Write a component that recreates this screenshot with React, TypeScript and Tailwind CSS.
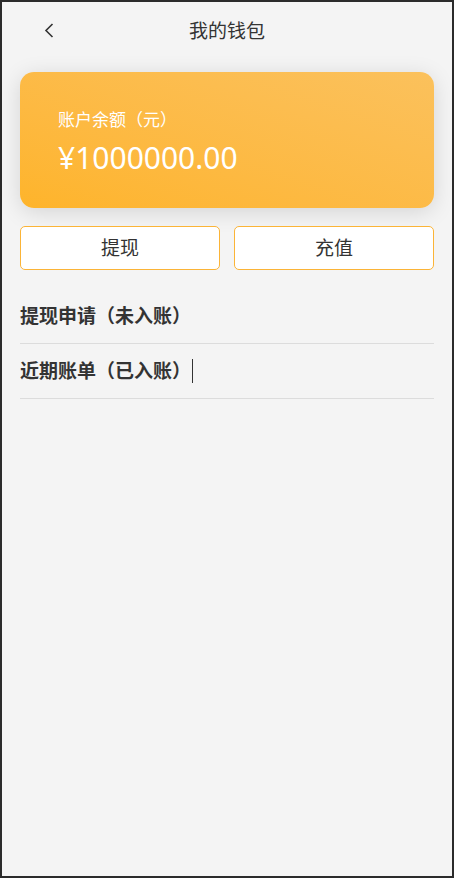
import React from "react";

export default function App() {
  return (
    <div
      className="w-[454px] h-[878px] border-2 border-[#2b2b2b] bg-[#f4f4f4] flex flex-col"
      style={{ fontFamily: '"Noto Sans", "Noto Sans CJK SC", sans-serif' }}
    >
      <div className="relative h-[58px] flex items-center justify-center shrink-0">
        <svg
          className="absolute left-[42px] top-[21px]"
          width="10"
          height="15"
          viewBox="0 0 10 15"
          fill="none"
        >
          <polyline
            points="8.5,1 2,7.5 8.5,14"
            stroke="#333"
            strokeWidth="1.6"
            fill="none"
          />
        </svg>
        <span className="text-[19px] text-[#333] leading-[24px]">我的钱包</span>
      </div>
      <div className="px-[18px] pt-[12px] flex flex-col">
        <div className="h-[136px] rounded-[14px] bg-linear-to-tr from-[#feb42a] to-[#fbc15c] shadow-[0_4px_22px_rgba(0,0,0,0.13)] pl-[38px] pt-[38px] flex flex-col text-white">
          <div className="text-[17px] leading-[20px]">账户余额（元）</div>
          <div className="text-[30px] leading-[36px] mt-[10px]">¥1000000.00</div>
        </div>
        <div className="mt-[18px] flex gap-[14px]">
          <button className="flex-1 h-[44px] bg-white border border-[#fbb437] rounded-[5px] text-[19px] text-[#333] flex items-center justify-center">
            提现
          </button>
          <button className="flex-1 h-[44px] bg-white border border-[#fbb437] rounded-[5px] text-[19px] text-[#333] flex items-center justify-center">
            充值
          </button>
        </div>
        <div className="mt-[19px] flex flex-col">
          <div className="h-[55px] border-b border-[#dcdcdc] flex items-center">
            <span className="text-[19px] font-bold text-[#333]">提现申请（未入账）</span>
          </div>
          <div className="h-[55px] border-b border-[#dcdcdc] flex items-center">
            <span className="text-[19px] font-bold text-[#333]">近期账单（已入账）</span>
            <span className="w-px h-[24px] bg-[#333] ml-[1px]"></span>
          </div>
        </div>
      </div>
    </div>
  );
}
